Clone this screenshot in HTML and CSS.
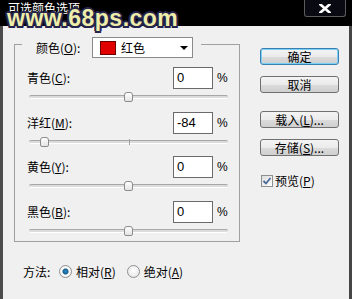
FILE: index.html
```html
<!DOCTYPE html>
<html>
<head>
<meta charset="utf-8">
<link rel="stylesheet" href="styles.css">
</head>
<body>
<div class="win">
  <div class="titlebar">
    <span class="title">可选颜色选项</span>
    <span class="close">
      <svg width="12" height="9" viewBox="0 0 12 9"><path d="M1.5 0.5 L10.5 8.5 M10.5 0.5 L1.5 8.5" stroke="#fff" stroke-width="2.6" stroke-linecap="square"/></svg>
    </span>
    <span class="watermark">www.68ps.com</span>
  </div>
  <div class="main">
    <div class="left">
      <div class="group">
        <div class="grp-head">
          <span class="head-label">颜色(<u>O</u>):</span>
          <div class="dropdown">
            <span class="swatch"></span>
            <span class="dd-text">红色</span>
            <span class="arrow"></span>
          </div>
        </div>
        <div class="row first">
          <span class="lbl">青色(<u>C</u>):</span>
          <span class="input">0</span>
          <span class="pct">%</span>
        </div>
        <div class="slider"><div class="track"></div><div class="tick"></div><div class="thumb" style="left:50%"></div></div>
        <div class="row">
          <span class="lbl">洋红(<u>M</u>):</span>
          <span class="input">-84</span>
          <span class="pct">%</span>
        </div>
        <div class="slider"><div class="track"></div><div class="tick"></div><div class="thumb" style="left:8%"></div></div>
        <div class="row">
          <span class="lbl">黄色(<u>Y</u>):</span>
          <span class="input">0</span>
          <span class="pct">%</span>
        </div>
        <div class="slider"><div class="track"></div><div class="tick"></div><div class="thumb" style="left:50%"></div></div>
        <div class="row">
          <span class="lbl">黑色(<u>B</u>):</span>
          <span class="input">0</span>
          <span class="pct">%</span>
        </div>
        <div class="slider last"><div class="track"></div><div class="tick"></div><div class="thumb" style="left:50%"></div></div>
      </div>
      <div class="method">
        <span class="m-label">方法:</span>
        <span class="radio on"></span><span class="r-text">相对(<u>R</u>)</span>
        <span class="radio second"></span><span class="r-text">绝对(<u>A</u>)</span>
      </div>
    </div>
    <div class="right">
      <div class="btn focus">确定</div>
      <div class="btn">取消</div>
      <div class="btn gap">载入(<u>L</u>)...</div>
      <div class="btn">存储(<u>S</u>)...</div>
      <div class="check-row">
        <span class="checkbox">
          <svg width="10" height="10" viewBox="0 0 10 10"><path d="M1.5 5 L4 7.5 L8.5 2" fill="none" stroke="#4a6a9a" stroke-width="1.8"/></svg>
        </span>
        <span class="c-text">预览(<u>P</u>)</span>
      </div>
    </div>
  </div>
</div>
</body>
</html>
```

FILE: styles.css
```css
html, body {
  margin: 0;
  padding: 0;
}
body {
  width: 352px;
  height: 299px;
  overflow: hidden;
  font-family: "Noto Sans CJK SC", "Liberation Sans", sans-serif;
  font-size: 12px;
  color: #000;
}
.win {
  width: 352px;
  height: 299px;
  display: flex;
  flex-direction: column;
  background: #f0f0f0;
}
.titlebar {
  position: relative;
  height: 26px;
  flex: none;
  background: #000;
  display: flex;
  align-items: flex-start;
  padding-left: 8px;
}
.title {
  color: #fff;
  font-size: 12px;
  line-height: 14px;
  margin-top: 1px;
}
.close {
  margin-left: auto;
  margin-right: 6px;
  width: 42px;
  height: 17px;
  box-sizing: border-box;
  border: 1px solid #5c5c5c;
  border-top: none;
  border-radius: 0 0 3px 3px;
  background: #0a0a12;
  display: flex;
  align-items: center;
  justify-content: center;
}
.watermark {
  position: absolute;
  left: 7px;
  top: 6px;
  font-family: "Liberation Sans", Arial, sans-serif;
  font-weight: bold;
  font-size: 23px;
  line-height: 24px;
  color: #eeeeaa;
  letter-spacing: 0.5px;
  text-shadow:
    2px 0 0 #24244c, -2px 0 0 #24244c, 0 2px 0 #24244c, 0 -2px 0 #24244c,
    1.5px 1.5px 0 #24244c, -1.5px 1.5px 0 #24244c, 1.5px -1.5px 0 #24244c, -1.5px -1.5px 0 #24244c;
}
.main {
  flex: 1;
  display: flex;
  align-items: flex-start;
  border-left: 3px solid #4c4c4c;
  border-right: 3px solid #464646;
  padding-left: 11px;
  padding-top: 18px;
}
.left {
  width: 226px;
  flex: none;
}
.group {
  border: 1px solid #a0a0a0;
  padding: 0 11px 4.5px 14px;
}
.grp-head {
  display: flex;
  align-items: center;
  width: fit-content;
  margin: -8px 0 0 -7px;
  padding: 0 8px 0 14px;
  background: #f0f0f0;
  height: 21px;
}
.head-label {
  width: 56px;
  line-height: 16px;
}
.dropdown {
  width: 101px;
  height: 21px;
  box-sizing: border-box;
  border: 1px solid #8a8a8a;
  background: #fff;
  display: flex;
  align-items: center;
  padding-left: 7px;
}
.swatch {
  width: 16px;
  height: 14px;
  box-sizing: border-box;
  border: 1px solid #6a0000;
  background: #e00000;
}
.dd-text {
  margin-left: 5px;
  line-height: 16px;
}
.arrow {
  margin-left: auto;
  margin-right: 4px;
  width: 0;
  height: 0;
  border-left: 4px solid transparent;
  border-right: 4px solid transparent;
  border-top: 4px solid #000;
}
.row {
  display: flex;
  align-items: center;
  height: 22px;
}
.row.first {
  margin-top: 9px;
}
.lbl {
  flex: 1;
  margin-left: -2px;
  line-height: 16px;
}
.input {
  width: 40px;
  height: 22px;
  box-sizing: border-box;
  border: 1px solid #6a6a6a;
  background: #fff;
  font-family: "Liberation Sans", Arial, sans-serif;
  font-size: 13px;
  line-height: 20px;
  padding-left: 3px;
}
.pct {
  width: 11px;
  margin-left: 4px;
  font-family: "Liberation Sans", Arial, sans-serif;
  font-size: 12px;
}
.slider {
  position: relative;
  height: 12px;
  margin: 2px 0 8.5px 0;
}
.slider.last {
  margin-bottom: 0;
}
.track {
  position: absolute;
  left: 0;
  right: 0;
  top: 4px;
  height: 4px;
  box-sizing: border-box;
  border-top: 1px solid #a8a8a8;
  border-bottom: 1px solid #ffffff;
  background: #dcdcdc;
  border-radius: 2px;
}
.tick {
  position: absolute;
  left: 50%;
  top: 3px;
  width: 1px;
  height: 6px;
  background: #a0a0a0;
}
.thumb {
  position: absolute;
  top: 1px;
  width: 9px;
  height: 10px;
  margin-left: -4.5px;
  box-sizing: border-box;
  border: 1px solid #8c8c8c;
  border-radius: 3px 3px 2px 2px;
  background: linear-gradient(#ffffff, #e4e4e4);
}
.method {
  display: flex;
  align-items: center;
  margin: 21.5px 0 0 9px;
  height: 16px;
}
.m-label {
  width: 36px;
}
.radio {
  width: 13px;
  height: 13px;
  box-sizing: border-box;
  border-radius: 50%;
  border: 1px solid #8e8f8f;
  background: radial-gradient(circle at 50% 40%, #ffffff, #e2e2e2);
}
.radio.on {
  background: radial-gradient(circle, #2a8cc8 0, #1a5f8e 2.5px, #ffffff 3.6px, #f4f4f4 5px);
}
.radio.second {
  margin-left: 11px;
}
.r-text {
  margin-left: 4px;
  line-height: 16px;
}
.right {
  width: 79px;
  margin-left: 20px;
  margin-top: 4px;
  flex: none;
}
.btn {
  width: 79px;
  height: 17px;
  box-sizing: border-box;
  border: 1px solid #707070;
  border-radius: 3px;
  background: linear-gradient(#f4f4f4, #ebebeb 50%, #dcdcdc 50%, #cfcfcf);
  text-align: center;
  line-height: 15px;
  margin-bottom: 11px;
}
.btn.focus {
  border-color: #3c7fb1;
  box-shadow: inset 0 0 0 1px #7ad0f4;
}
.btn.gap {
  margin-top: 18px;
}
.check-row {
  display: flex;
  align-items: center;
  margin-top: 18px;
  margin-left: 1px;
  height: 14px;
}
.checkbox {
  width: 12px;
  height: 12px;
  box-sizing: border-box;
  border: 1px solid #8e8f8f;
  background: linear-gradient(135deg, #dcdcdc, #ffffff);
  display: flex;
  align-items: center;
  justify-content: center;
}
.c-text {
  margin-left: 2px;
  line-height: 16px;
}
```
